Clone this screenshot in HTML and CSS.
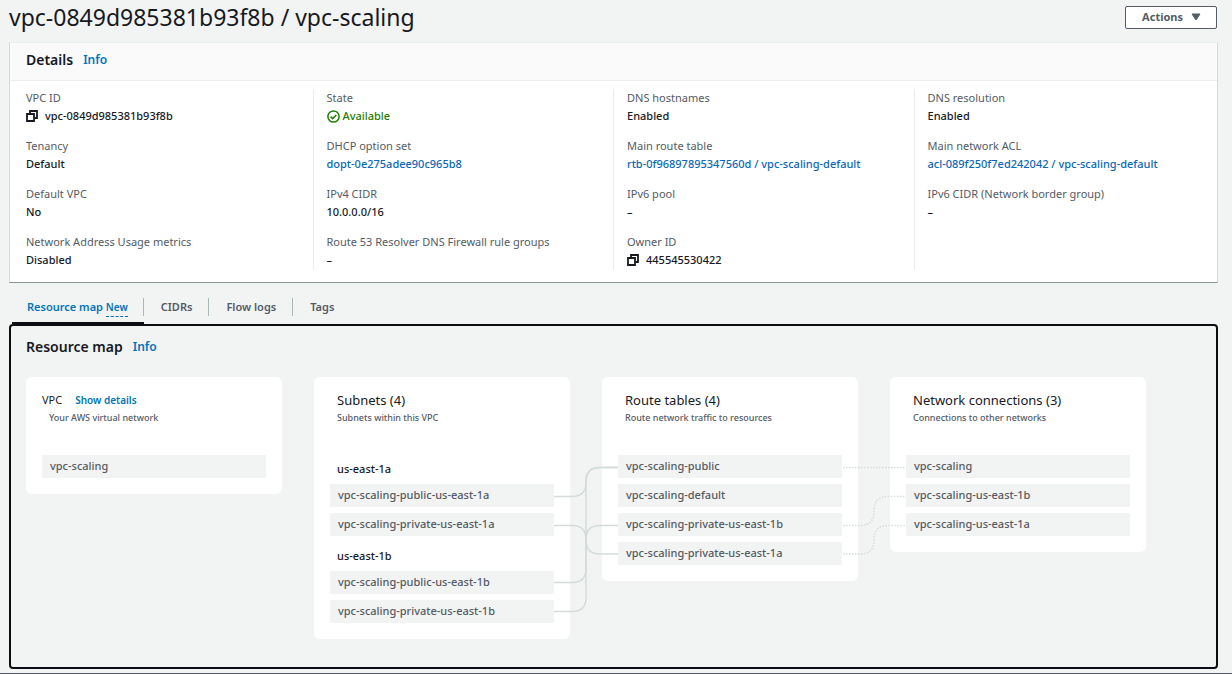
FILE: index.html
```html
<!DOCTYPE html>
<html lang="en">
<head>
<meta charset="utf-8">
<title>vpc-0849d985381b93f8b / vpc-scaling</title>
<link rel="stylesheet" href="styles.css">
</head>
<body class="page">
<svg class="defs" width="0" height="0" aria-hidden="true">
  <symbol id="copy" viewBox="0 0 12 12">
    <path d="M4 3.500V1h7v7H8.500" fill="none" stroke="currentColor" stroke-width="1.800"/>
    <path d="M1 4h7v7H1z" fill="#fff" stroke="currentColor" stroke-width="1.800"/>
  </symbol>
</svg>
<main class="main">
  <header class="title-bar">
    <h1 class="title">vpc-0849d985381b93f8b / vpc-scaling</h1>
    <button class="actions" type="button">Actions
      <svg class="caret" viewBox="0 0 10 8" aria-hidden="true"><path d="M1 1h8L5 7z" fill="currentColor" stroke="currentColor" stroke-linejoin="round"/></svg>
    </button>
  </header>

  <section class="details">
    <div class="details-head">
      <h2 class="heading">Details</h2>
      <a class="info" href="#details-info">Info</a>
    </div>
    <div class="details-body">
      <dl class="column">
        <div class="field"><dt class="label">VPC ID</dt><dd class="value value-icon"><button class="copy" type="button" aria-label="Copy VPC ID"><svg class="copy-icon"><use href="#copy"/></svg></button>vpc-0849d985381b93f8b</dd></div>
        <div class="field"><dt class="label">Tenancy</dt><dd class="value">Default</dd></div>
        <div class="field"><dt class="label">Default VPC</dt><dd class="value">No</dd></div>
        <div class="field"><dt class="label">Network Address Usage metrics</dt><dd class="value">Disabled</dd></div>
      </dl>
      <dl class="column">
        <div class="field"><dt class="label">State</dt><dd class="value status"><svg class="status-icon" viewBox="0 0 13 13" aria-hidden="true"><circle cx="6.500" cy="6.500" r="5.600"/><path d="M3.700 6.600l2 2L9.300 4.900"/></svg>Available</dd></div>
        <div class="field"><dt class="label">DHCP option set</dt><dd class="value"><a class="link" href="#dopt">dopt-0e275adee90c965b8</a></dd></div>
        <div class="field"><dt class="label">IPv4 CIDR</dt><dd class="value">10.0.0.0/16</dd></div>
        <div class="field"><dt class="label">Route 53 Resolver DNS Firewall rule groups</dt><dd class="value">–</dd></div>
      </dl>
      <dl class="column">
        <div class="field"><dt class="label">DNS hostnames</dt><dd class="value">Enabled</dd></div>
        <div class="field"><dt class="label">Main route table</dt><dd class="value"><a class="link" href="#rtb">rtb-0f96897895347560d / vpc-scaling-default</a></dd></div>
        <div class="field"><dt class="label">IPv6 pool</dt><dd class="value">–</dd></div>
        <div class="field"><dt class="label">Owner ID</dt><dd class="value value-icon"><button class="copy" type="button" aria-label="Copy owner ID"><svg class="copy-icon"><use href="#copy"/></svg></button>445545530422</dd></div>
      </dl>
      <dl class="column">
        <div class="field"><dt class="label">DNS resolution</dt><dd class="value">Enabled</dd></div>
        <div class="field"><dt class="label">Main network ACL</dt><dd class="value"><a class="link" href="#acl">acl-089f250f7ed242042 / vpc-scaling-default</a></dd></div>
        <div class="field"><dt class="label">IPv6 CIDR (Network border group)</dt><dd class="value">–</dd></div>
      </dl>
    </div>
  </section>

  <nav class="tabs">
    <a class="tab tab-active" href="#map"><span class="tab-text">Resource map <span class="new">New</span></span></a>
    <a class="tab" href="#cidrs"><span class="tab-text">CIDRs</span></a>
    <a class="tab" href="#flow-logs"><span class="tab-text">Flow logs</span></a>
    <a class="tab" href="#tags"><span class="tab-text">Tags</span></a>
  </nav>

  <section class="map" id="map">
    <div class="map-head">
      <h2 class="heading">Resource map</h2>
      <a class="info" href="#map-info">Info</a>
    </div>
    <div class="canvas">
      <article class="card">
        <div class="card-head card-head-vpc">
          <div class="vpc-row"><h3 class="vpc-title">VPC</h3><button class="show" type="button">Show details</button></div>
          <p class="card-sub vpc-sub">Your AWS virtual network</p>
        </div>
        <div class="items"><div class="item">vpc-scaling</div></div>
      </article>
      <article class="card">
        <div class="card-head"><h3 class="card-title">Subnets (4)</h3><p class="card-sub">Subnets within this VPC</p></div>
        <div class="items">
          <h4 class="zone">us-east-1a</h4>
          <div class="item">vpc-scaling-public-us-east-1a</div>
          <div class="item">vpc-scaling-private-us-east-1a</div>
          <h4 class="zone">us-east-1b</h4>
          <div class="item">vpc-scaling-public-us-east-1b</div>
          <div class="item">vpc-scaling-private-us-east-1b</div>
        </div>
      </article>
      <article class="card">
        <div class="card-head"><h3 class="card-title">Route tables (4)</h3><p class="card-sub">Route network traffic to resources</p></div>
        <div class="items">
          <div class="item">vpc-scaling-public</div>
          <div class="item">vpc-scaling-default</div>
          <div class="item">vpc-scaling-private-us-east-1b</div>
          <div class="item">vpc-scaling-private-us-east-1a</div>
        </div>
      </article>
      <article class="card">
        <div class="card-head"><h3 class="card-title">Network connections (3)</h3><p class="card-sub">Connections to other networks</p></div>
        <div class="items">
          <div class="item">vpc-scaling</div>
          <div class="item">vpc-scaling-us-east-1b</div>
          <div class="item">vpc-scaling-us-east-1a</div>
        </div>
      </article>
      <svg class="links" viewBox="0 0 1120 262" aria-hidden="true">
        <g class="solid">
          <path d="M528 119.500H546Q560 119.500 560 105.500V104.500Q560 90.500 574 90.500H592"/>
          <path d="M528 148.500H546Q560 148.500 560 162.500V163Q560 177 574 177H592"/>
          <path d="M528 205.500H546Q560 205.500 560 191.500V104.500Q560 90.500 574 90.500H592"/>
          <path d="M528 234.500H546Q560 234.500 560 220.500V162.500Q560 148.500 574 148.500H592"/>
        </g>
        <g class="dotted">
          <path d="M817 90.500H880"/>
          <path d="M817 148.500H834Q848 148.500 848 134.500V133.500Q848 119.500 862 119.500H880"/>
          <path d="M817 177H834Q848 177 848 163V162.500Q848 148.500 862 148.500H880"/>
        </g>
      </svg>
    </div>
  </section>
</main>
<footer class="footer"></footer>
</body>
</html>
```
FILE: styles.css
```css
* { box-sizing: border-box; }
h1, h2, h3, h4, p, dl, dd { margin: 0; }
a { text-decoration: none; }
button { font-family: inherit; cursor: pointer; }

.page {
  margin: 0;
  min-height: 100vh;
  display: flex;
  flex-direction: column;
  background: #f2f3f3;
  color: #16191f;
  font-family: "Noto Sans", "Open Sans", sans-serif;
  font-size: 11px;
  line-height: 18px;
}
.defs { position: absolute; }
.main { flex: 1; display: flex; flex-direction: column; padding: 0 14px 4px 9px; }

.title-bar { display: flex; justify-content: space-between; align-items: flex-start; height: 42px; }
.title { font-size: 23px; font-weight: 400; line-height: 34px; }
.actions {
  display: flex;
  align-items: center;
  gap: 8px;
  height: 23px;
  margin: 6px 1px 0 0;
  padding: 0 15px 2px 16px;
  background: #fff;
  border: 1px solid #545b64;
  border-radius: 2px;
  color: #545b64;
  font-size: 11px;
  font-weight: 700;
}
.caret { width: 10px; height: 8px; }

.details { background: #fff; border: 1px solid #d5dbdb; border-top-color: #eaeded; border-bottom-color: #879596; }
.details-head {
  display: flex;
  align-items: center;
  gap: 10px;
  height: 38px;
  padding: 0 16px 4px;
  background: #fafafa;
  border-bottom: 1px solid #eaeded;
}
.heading { font-size: 14px; font-weight: 600; line-height: 20px; }
.info { color: #0073bb; font-size: 12px; font-weight: 600; }
.details-body { display: grid; grid-template-columns: repeat(4, 1fr); padding: 8px 3px 12px 2px; }
.column { display: flex; flex-direction: column; gap: 12px; padding: 0 0 1px 13px; border-left: 1px solid #eaeded; }
.column:first-child { border-left-color: transparent; }
.field { white-space: nowrap; }
.label { color: #545b64; }
.value { font-weight: 500; }
.link { color: #0a67b8; }
.value-icon { display: flex; align-items: center; gap: 7px; }
.copy { display: flex; padding: 0; border: 0; background: none; color: #16191f; }
.copy-icon { width: 12px; height: 12px; }
.status { display: flex; align-items: center; gap: 3px; color: #1d8102; }
.status-icon { width: 13px; height: 13px; fill: none; stroke: #1d8102; stroke-width: 1.5; }

.tabs { display: flex; height: 41px; padding: 7px 0 0 3px; }
.tab { padding: 8px 0; color: #545b64; font-weight: 600; }
.tab-text { display: block; padding: 0 16px 0 17px; border-right: 1px solid #aab7b8; }
.tab:last-child .tab-text { border-right: 0; }
.tab-active { padding-bottom: 6px; color: #0073bb; border-bottom: 2px solid #0b0d10; }
.tab-active .tab-text { padding: 0 15px; }
.new { font-size: 10px; border-bottom: 1px dashed #0073bb; padding-bottom: 2px; }

.map { flex: 1; padding: 11px 15px 26px; border: 2px solid #0b0d10; border-radius: 4px; }
.map-head { display: flex; align-items: center; gap: 10px; margin-bottom: 20px; }
.canvas {
  position: relative;
  display: grid;
  grid-template-columns: repeat(4, 256px);
  column-gap: 32px;
  align-items: start;
}
.card { padding: 0 16px 16px; background: #fff; border-radius: 6px; }
.card-head { height: 78px; padding: 14px 7px 0; }
.card-head-vpc { padding-left: 0; }
.card-title { font-size: 13px; font-weight: 400; line-height: 18px; }
.card-sub { color: #545b64; font-size: 9px; font-weight: 500; line-height: 18px; }
.vpc-row { display: flex; align-items: center; gap: 13px; height: 18px; }
.vpc-title { font-size: 11px; font-weight: 400; }
.vpc-sub { padding-left: 7px; }
.show { padding: 0; border: 0; background: none; color: #0073bb; font-size: 10px; font-weight: 600; }
.items { display: flex; flex-direction: column; gap: 6px; }
.item { height: 23px; padding: 0 8px; background: #f2f3f3; border-radius: 1px; color: #545b64; font-weight: 500; line-height: 22px; }
.zone { height: 23px; padding: 5px 7px 0; font-size: 11px; font-weight: 500; }
.links { position: absolute; top: 0; left: 0; width: 1120px; height: 262px; fill: none; pointer-events: none; }
.solid { stroke: #d5dbdb; stroke-width: 1.5; }
.dotted { stroke: #d5dbdb; stroke-dasharray: 1.5 1.5; stroke-width: 1.5; }

.footer { border-top: 1px solid #545b64; }
```
